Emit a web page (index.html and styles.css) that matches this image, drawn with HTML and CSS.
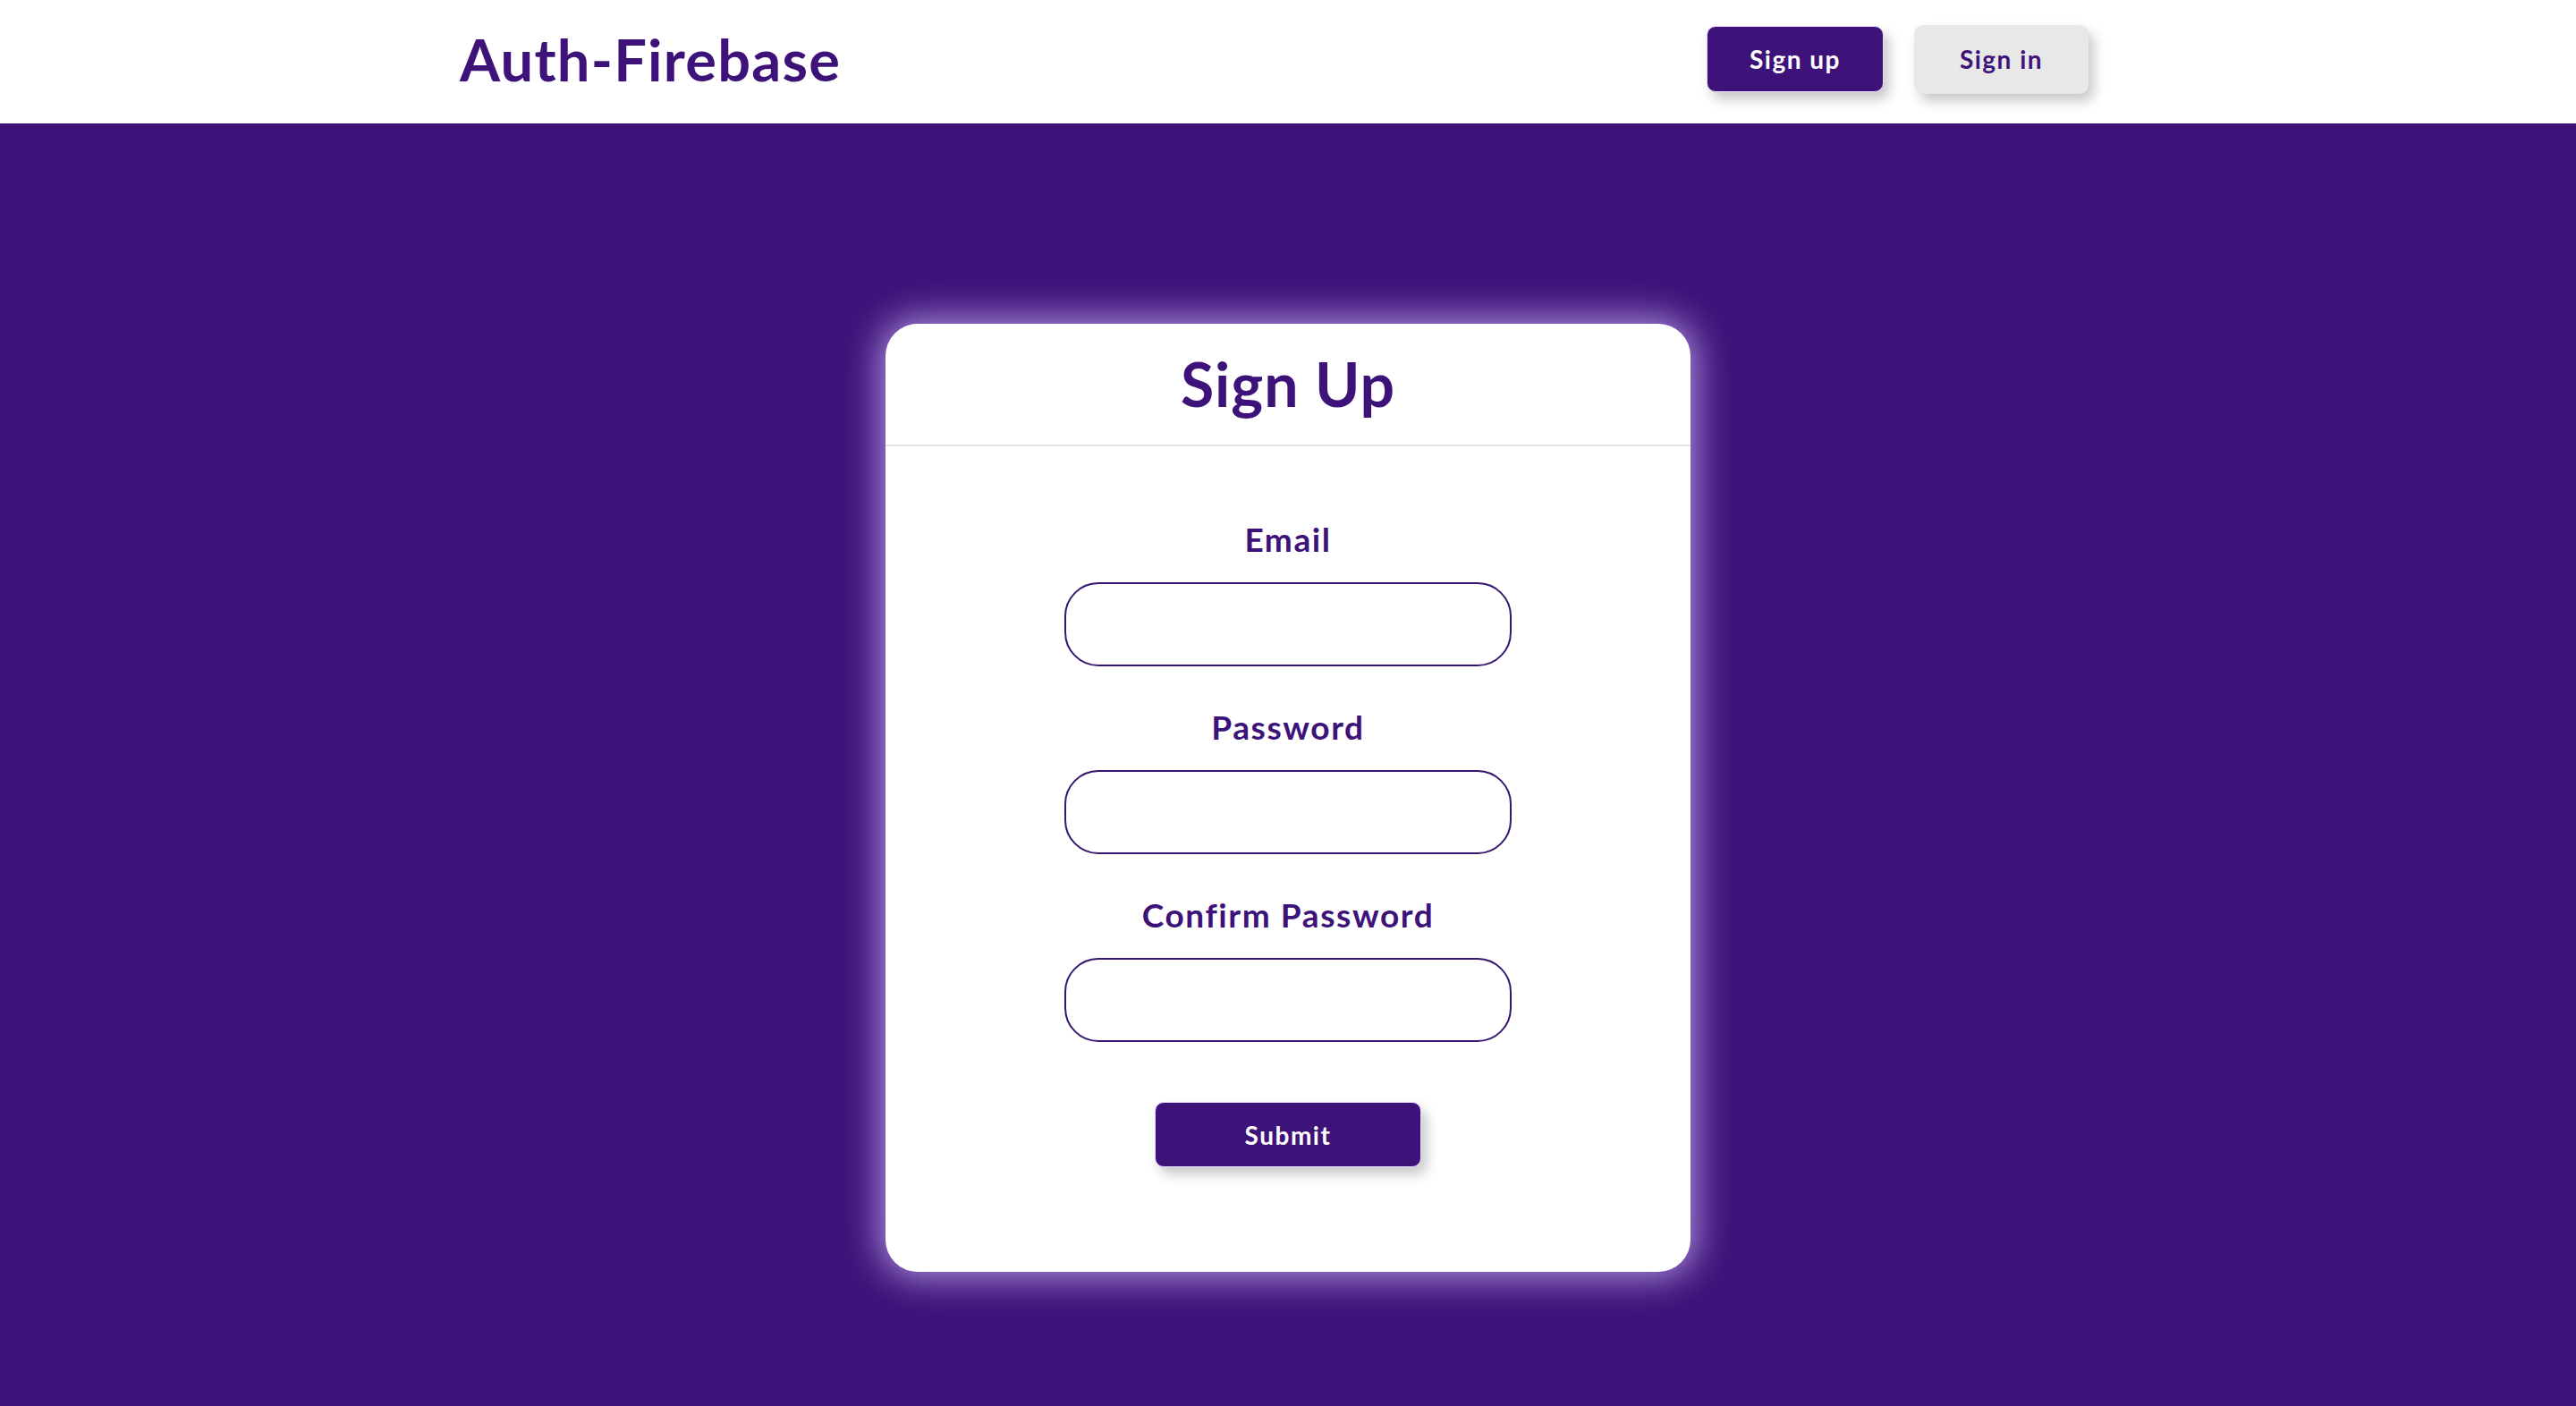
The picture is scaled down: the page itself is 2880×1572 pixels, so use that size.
FILE: index.html
```html
<!DOCTYPE html>
<html lang="en">
<head>
<meta charset="utf-8">
<title>Auth-Firebase</title>
<link rel="stylesheet" href="styles.css">
</head>
<body>
<header class="topbar">
  <div class="brand">Auth-Firebase</div>
  <nav class="nav">
    <button class="btn btn-primary">Sign up</button>
    <button class="btn btn-light">Sign in</button>
  </nav>
</header>
<main class="stage">
  <section class="card">
    <div class="card-head"><h1 class="card-title">Sign Up</h1></div>
    <form class="card-body">
      <label class="field-label" for="email">Email</label>
      <input class="field-input" id="email" type="email">
      <label class="field-label" for="pw">Password</label>
      <input class="field-input" id="pw" type="password">
      <label class="field-label" for="pw2">Confirm Password</label>
      <input class="field-input" id="pw2" type="password">
      <button type="button" class="btn btn-primary btn-submit">Submit</button>
    </form>
  </section>
</main>
</body>
</html>
```
FILE: styles.css
```css
html, body {
  margin: 0;
  padding: 0;
  height: 100%;
}
body {
  background: #3d1379;
  font-family: "Lato", "Open Sans", sans-serif;
  color: #3d1379;
}
.topbar {
  height: 138px;
  background: #ffffff;
  display: flex;
  align-items: center;
  justify-content: space-between;
  padding: 0 545px 6px 514px;
  box-sizing: border-box;
}
.brand {
  font-size: 65px;
  font-weight: 700;
  letter-spacing: 1.2px;
  color: #3d1379;
}
.nav {
  display: flex;
  gap: 34px;
  align-items: center;
}
.btn {
  font-family: inherit;
  font-weight: 700;
  font-size: 28px;
  letter-spacing: 1.5px;
  border-radius: 10px;
  cursor: pointer;
  box-shadow: 6px 8px 14px rgba(0, 0, 0, 0.22);
}
.btn-primary {
  background: #3d1379;
  color: #ffffff;
  border: 1px solid #e6d8ff;
  width: 198px;
  height: 74px;
}
.btn-light {
  background: #e8e8e8;
  color: #3d1379;
  border: none;
  width: 195px;
  height: 77px;
}
.stage {
  display: flex;
  justify-content: center;
  padding-top: 224px;
}
.card {
  width: 900px;
  height: 1060px;
  background: #ffffff;
  border-radius: 36px;
  box-shadow: 0 0 40px 6px rgba(214, 190, 255, 0.75);
}
.card-head {
  height: 137px;
  padding-bottom: 3px;
  box-sizing: border-box;
  border-bottom: 2px solid #e4e2ea;
  display: flex;
  align-items: center;
  justify-content: center;
}
.card-title {
  margin: 0;
  font-size: 68px;
  font-weight: 700;
  letter-spacing: 1px;
  color: #3d1379;
}
.card-body {
  display: flex;
  flex-direction: column;
  align-items: center;
  padding-top: 82px;
}
.field-label {
  font-size: 37px;
  line-height: 44px;
  font-weight: 700;
  letter-spacing: 1.6px;
  color: #3d1379;
  margin-bottom: 26px;
}
.field-input {
  width: 500px;
  height: 94px;
  box-sizing: border-box;
  border: 2px solid #36166e;
  border-radius: 38px;
  background: #ffffff;
  margin-bottom: 46px;
  outline: none;
}
.btn-submit {
  margin-top: 21px;
  width: 298px;
  height: 73px;
  font-size: 28px;
}
```
